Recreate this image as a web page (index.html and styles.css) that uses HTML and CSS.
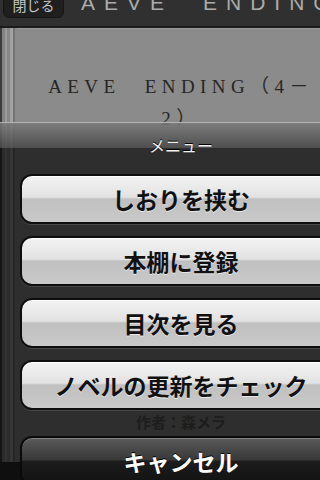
FILE: index.html
```html
<!DOCTYPE html>
<html lang="ja">
<head>
<meta charset="utf-8">
<title>AEVE ENDING</title>
<link rel="stylesheet" href="styles.css">
</head>
<body>
<div class="screen">
  <header class="topbar">
    <button class="close">閉じる</button>
    <h1 class="title">AEVE　ENDING（4－2）</h1>
  </header>
  <main class="reader">
    <div class="gutter"></div>
    <section class="pagebody">
      <h2 class="book-title">AEVE　ENDING（4－<br>2）</h2>
      <p class="author">作者：森メラ</p>
    </section>
    <div class="gutter gutter-right"></div>
  </main>
  <footer class="bottombar"></footer>

  <div class="sheet">
    <p class="sheet-title">メニュー</p>
    <div class="sheet-actions">
      <button class="action">しおりを挟む</button>
      <button class="action">本棚に登録</button>
      <button class="action">目次を見る</button>
      <button class="action">ノベルの更新をチェック</button>
      <button class="action action-cancel">キャンセル</button>
    </div>
  </div>
</div>
</body>
</html>
```
FILE: styles.css
```css
html, body {
  margin: 0;
  padding: 0;
  overflow: hidden;
  background: #2c2c2c;
}

.screen {
  position: relative;
  width: 362px;
  height: 480px;
  overflow: hidden;
  font-family: "Noto Sans CJK JP", sans-serif;
}

/* top bar */
.topbar {
  display: flex;
  align-items: flex-start;
  height: 26px;
  background: #303030;
  border-bottom: 2px solid #1b1b1b;
  overflow: hidden;
}

.close {
  flex: none;
  margin: -8px 0 0 3px;
  width: 61px;
  height: 26px;
  padding: 0;
  border: 1px solid #161616;
  border-radius: 0 0 6px 6px;
  background: #1f1f1f;
  color: #c4c4c4;
  font-family: "Noto Sans CJK JP", sans-serif;
  font-size: 14px;
  line-height: 22px;
}

.title {
  margin: -7px 0 0 17px;
  font-family: "Liberation Sans", "Noto Sans CJK JP", sans-serif;
  font-weight: normal;
  font-size: 21px;
  line-height: 20px;
  letter-spacing: 9px;
  color: #ababab;
  white-space: nowrap;
}

/* reader */
.reader {
  display: flex;
  height: 434px;
  background: #8b8b8b;
}

.gutter {
  flex: none;
  width: 17px;
  background: linear-gradient(to right,
    #3c3c3c 0 2px,
    #828282 2px 5px,
    #9c9c9c 5px 7px,
    #868686 7px 10px,
    #a2a2a2 10px 13px,
    #747474 13px 15px,
    #8b8b8b 15px);
}

.gutter-right {
  transform: scaleX(-1);
}

.pagebody {
  flex: 1;
  display: flex;
  flex-direction: column;
  align-items: center;
  border-top: 1px solid #9a9a9a;
}

.book-title {
  margin: 42px 0 0;
  font-family: "Liberation Serif", "Noto Sans CJK JP", serif;
  font-weight: normal;
  font-size: 19px;
  line-height: 32px;
  letter-spacing: 5.4px;
  color: #262626;
  text-align: center;
}

.author {
  margin: auto 0 30px;
  font-size: 15px;
  font-weight: bold;
  line-height: 20px;
  color: #585858;
}

.bottombar {
  height: 18px;
  background: #2d2d2d;
}

/* action sheet */
.sheet {
  position: absolute;
  left: 0;
  right: 0;
  top: 122px;
  bottom: 0;
  border-top: 1px solid rgba(205, 205, 205, 0.85);
  background: linear-gradient(to bottom,
    rgba(122, 122, 122, 0.88) 0,
    rgba(70, 70, 70, 0.88) 25px,
    rgba(0, 0, 0, 0.67) 25px);
}

.sheet-title {
  margin: 0 0 20px;
  padding-top: 13px;
  font-size: 16px;
  line-height: 18px;
  color: #f2f2f2;
  text-align: center;
  text-shadow: 0 -1px 0 #000;
}

.sheet-actions {
  display: flex;
  flex-direction: column;
  gap: 12px;
  padding: 0 20px;
}

.action {
  box-sizing: border-box;
  height: 50px;
  padding: 0;
  border: 2px solid #0e0e0e;
  border-radius: 12px;
  background: linear-gradient(to bottom,
    #f3f3f3 0,
    #e2e2e2 46%,
    #c0c0c0 50%,
    #c9c9c9 100%);
  box-shadow: inset 0 1px 0 #ffffff, 0 1px 0 rgba(255, 255, 255, 0.12);
  color: #111;
  font-family: "Noto Sans CJK JP", sans-serif;
  font-size: 23px;
  font-weight: bold;
  line-height: 44px;
  text-align: center;
  text-shadow: 0 1px 0 rgba(255, 255, 255, 0.6);
}

.action-cancel {
  margin-top: 14px;
  border-color: #0a0a0a;
  background: linear-gradient(to bottom,
    #5a5a5a 0,
    #383838 48%,
    #1c1c1c 50%,
    #121212 100%);
  box-shadow: inset 0 1px 0 rgba(255, 255, 255, 0.25);
  color: #fff;
  text-shadow: 0 -1px 0 #000;
}
```
